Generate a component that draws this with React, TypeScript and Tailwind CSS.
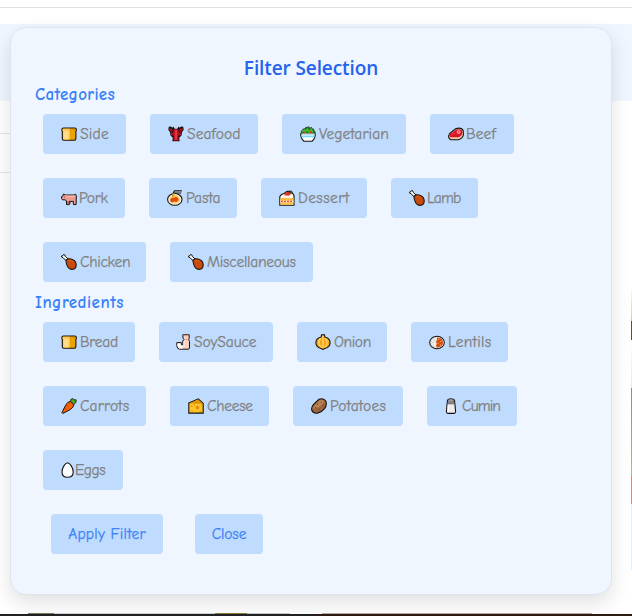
import type { ReactNode } from "react";

type IconName =
  | "bread" | "lobster" | "salad" | "steak" | "pig" | "pasta" | "cake" | "drumstick"
  | "bottle" | "onion" | "curry" | "carrot" | "cheese" | "potato" | "salt" | "egg";

const ink = "#17120f";

const drawings: Record<IconName, ReactNode> = {
  bread: (
    <>
      <path d="M2.500 2h11.200q1.700 0 1.700 1.700 0 1-.5 1.500v7.300q0 1.700-1.400 1.700H2.700q-1.400 0-1.400-1.700V5.200Q.8 4.700.8 3.700.8 2 2.500 2Z" fill="#eba300" stroke={ink} strokeWidth="1.100" />
      <path d="M2.600 2.800h6.200v10.700H2.900q-.9 0-.9-.9V5Q1.500 4.500 1.500 3.800q0-1 1.100-1Z" fill="#ffc95a" />
      <path d="M2.400 5h5v8.200H3q-.6 0-.6-.6Z" fill="#ffdc8c" />
      <path d="M9 3.200h4.800" stroke="#c9830a" strokeWidth=".8" />
    </>
  ),
  lobster: (
    <>
      <path d="M.8.8 3 .5l1.200 1.200L5.600.5l1 2.300h2.800l1-2.300 1.400 1.200L13 .5l2.200.3.500 3-1.700 2.400-.500 3.300-2.300 2.200.500 3.500H4.300l.500-3.500-2.300-2.200L2 6.200.3 3.800Z" fill={ink} />
      <path d="M1.500 1.700 3 3.200l.8-1 .8 2.200L4 5.700 1.300 3.800ZM14.500 1.700 13 3.200l-.8-1-.8 2.200.6 1.300 2.700-1.900ZM6 3.500h4l1.200 3.200-1.100 4.300.6 3.200H5.300l.6-3.200-1.100-4.300Z" fill="#c50f1f" />
      <path d="M7.300 3.500h1.500v9.600H7.300Z" fill="#ef3d50" />
      <path d="M2.800 6.400 5 7.600M2.900 8.500 5.200 9.200M13.200 6.400l-2.200 1.200m2.100.9-2.300.7M6 13.900h4" stroke="#d91c30" strokeWidth="1" fill="none" />
    </>
  ),
  salad: (
    <>
      <path d="m1 8 .3-3 1.300-.2.500-2 1.700.1L5.800 1l1.500 1 1-1.600L9.600 2l1.600-.8.700 1.700 1.900.1.100 1.900 1.200.5L15 8Z" fill="#16871c" stroke={ink} strokeWidth=".9" strokeDasharray="1.500 1" />
      <path d="m2.500 6 1.700-2 1.500 2 1.600-3 1.800 3 2-2.500L13 6" stroke="#55c938" strokeWidth="1.100" fill="none" />
      <path d="M4 7.200h2M9.800 6h1.800" stroke="#f03a17" strokeWidth="1.800" />
      <path d="M.7 8h14.600q0 4.800-3.400 7.300H4.100Q.7 12.800.7 8Z" fill="#fff" stroke={ink} strokeWidth="1.100" />
      <path d="M1.300 9.500h13.400l-.5 1.800H1.800ZM1.300 8h13.400v.8H1.300Z" fill="#73dcf6" />
      <path d="M1.500 8h13" stroke="#fff" strokeWidth="1" />
    </>
  ),
  steak: (
    <>
      <path d="M4.200 5.500 8 2.600q5.500-1.500 7.200 2.100l.2 4.200q-.8 3.500-4.800 4.800H3.200Q.4 13 .6 9.800.8 7.500 4.200 5.500Z" fill="#f1cba6" stroke={ink} strokeWidth="1.100" />
      <path d="M4.800 6.200 8.400 3.500q5-1.200 6 1.900.3 4-3.800 5.900H2.200Q1 9.500 1.800 8Z" fill="#d91427" />
      <circle cx="10.600" cy="6" r="1.500" fill="#e94955" stroke="#ffc7c5" strokeWidth=".8" />
      <path d="m3.500 8.500 3.200-1.400" stroke="#f04a55" strokeWidth=".8" />
    </>
  ),
  pig: (
    <>
      <path d="M.6 6.500 2 5.900l.4-1.900 2 1H13l1.600-.8.700 1.400-.2 9H12.400v-3.200H8.300v3.200H5.500v-3.700L3.900 9.800H1.500L.6 8.600Z" fill="#ed9a91" stroke={ink} strokeWidth="1" />
      <path d="M3 5.400h9.700q1.500.3 1.500 1.700H6.500Z" fill="#ffb9ae" />
      <path d="M3 7h1M9.500 11.700v2M6.800 11.200v2.700" stroke="#8f403d" strokeWidth=".8" />
    </>
  ),
  pasta: (
    <>
      <ellipse cx="7.800" cy="9.400" rx="7.200" ry="5.900" fill="#fff" stroke={ink} strokeWidth="1.100" />
      <ellipse cx="7.800" cy="9.400" rx="5.700" ry="4.500" fill="#ffd66b" />
      <path d="m3.200 9.200 2.200-1.800 1.700.6 1.700-1.600 2.100 1.500 1 2-2.500 2.200-2.200-.5-2 .9-1.800-1Z" fill="#df4c11" />
      <path d="M6.200 6.500V3.200L7.500.9h7.300M6.500 3h7.700" stroke={ink} strokeWidth="1.200" fill="none" />
      <path d="M7.500 1.900h6" stroke="#9b9b93" strokeWidth=".8" />
      <path d="M6.500 3.200v4.500" stroke="#eaa51f" strokeWidth="1.900" />
    </>
  ),
  cake: (
    <>
      <path d="M.8 6.500Q2 4 5.100 3.500L8 1.300l4.500.5 2.500 3.700v9.800H.8Z" fill="#fff5e8" stroke={ink} strokeWidth="1.100" />
      <path d="M1.400 8h13v6.600h-13Z" fill="#ffbd43" />
      <path d="M1.400 10.700h13v1.500h-13Z" fill="#fff" />
      <path d="M2 11.400h12" stroke="#e34b31" strokeWidth="1.300" strokeDasharray="2 1" />
      <path d="M5.200 5.200Q6 2 9.500 1.600l2.800 2.200-2.600 1.900Z" fill="#e2341f" />
      <path d="m10 .7 3 .7-.5 2.200-2-.9Z" fill="#198330" stroke={ink} strokeWidth=".5" />
    </>
  ),
  drumstick: (
    <>
      <path d="m4.800 6.500-2.700-2.800-1.500-.6.1-1.200L2 1.600 2.500.5l1.300.3.500 1.700 3 2.600Z" fill="#fff" stroke={ink} strokeWidth="1" />
      <path d="M4.900 6.300 7.200 4.800q5-.3 7.400 3.300 1.700 4.700-1.200 6.600-3.200 1.700-5.900-.9Q5.500 11.700 4.900 6.300Z" fill="#c84b0b" stroke={ink} strokeWidth="1.050" />
      <path d="M7 6.600q3-1.200 5.400 1.500" stroke="#e06418" strokeWidth=".8" fill="none" />
    </>
  ),
  bottle: (
    <>
      <path d="M6.800.8h6.400v3.500l-.6 1 .9 2.200v6.700q-.4 1-1.500 1H3.500Q1 14.900.8 11.500V8.600h4.500v2.200h1.500V7l1.200-1.700-.9-1Z" fill="#fbd4c3" stroke={ink} strokeWidth="1" />
      <path d="M1.500 9.500h3v2.100h2.200v2.800H3.800q-2-.3-2.300-2.800Z" fill="#fff" />
      <path d="M7.500 1.600h4.900M8.500 5.500h3.800" stroke="#d59c87" strokeWidth=".9" />
      <path d="M8 7.500v5" stroke="#ffeadf" strokeWidth="1.300" />
    </>
  ),
  onion: (
    <>
      <path d="m6.100 3 .5-2.300h2.800L9.900 3q5.300 1.300 5.200 5.900-.1 3.700-4.600 5.400L8 15.400l-2.500-1.100Q1 12.500.9 8.900.8 4.300 6.100 3Z" fill="#f3a81c" stroke={ink} strokeWidth="1.100" />
      <path d="M5.900 4.200Q3.500 6 3.900 9q.2 3.100 2.700 4.500M8 2v12M10.200 4.200q2.300 2 1.900 5.300-.2 2.300-2.500 4" stroke="#ffda78" strokeWidth="1.200" fill="none" />
    </>
  ),
  curry: (
    <>
      <ellipse cx="8" cy="8.500" rx="7.300" ry="6.300" fill="#fff" stroke={ink} strokeWidth="1.100" />
      <ellipse cx="8" cy="8.500" rx="6" ry="5" fill="#f1eee6" stroke="#a7aba8" strokeWidth=".4" />
      <path d="M8 3.500q5.700.2 6 5-.3 4.700-6 5l-1.100-1.700.9-1.800-.8-2 .9-1.900Z" fill="#d84c12" />
      <path d="M9 5.300h1.200M11 7.500h1.400M8.500 9.300h1.300M10.900 11H12" stroke="#ffb154" strokeWidth="1.100" />
      <path d="M3.500 8.500h1M5.200 6.500h.8" stroke="#75afa4" strokeWidth=".8" />
    </>
  ),
  carrot: (
    <>
      <path d="M9.500 3.200 13 6.500q-.6 3.200-3.700 5l-7.500 4-.9-.9 3.700-7.300q1.900-3.500 4.900-4.100Z" fill="#f4630c" stroke={ink} strokeWidth="1" />
      <path d="m9.700 3.700.2-2.400 2-.8 1 1.300h2.200v2.500l-2.400 2.200Z" fill="#55a51c" stroke={ink} strokeWidth=".8" />
      <path d="m5.300 6.800 2 1.900M8 4.500l1.500 1.600M4.200 10.300l1.500 1.300" stroke="#a93306" strokeWidth=".8" />
    </>
  ),
  cheese: (
    <>
      <path d="M.8 5 10.300.8l4.900 4.600v9.700H.8Z" fill="#ffc32b" stroke={ink} strokeWidth="1.100" />
      <path d="m1.500 5.500 8.700-3.900 4.300 4.100Z" fill="#e09208" />
      <circle cx="9.500" cy="9.600" r="1.800" fill="#dd8d08" />
      <path d="M3 8.300h1.500M3.500 12.900h1.400M13 7.900h1.300M11.600 13.300h1.600M6 7h1" stroke="#e7990b" strokeWidth="1.400" />
    </>
  ),
  potato: (
    <>
      <path d="M8 1.300q4.800-1.600 6.900 1.900 1.300 4.100-1.500 7.600-3 3.500-7 4.300-4 .6-5.600-2.800Q0 8.800 3 5.800Z" fill="#9c663c" stroke={ink} strokeWidth="1.100" />
      <path d="M8.300 2.300q3.900-1.300 5.400 1.600l-5.200 5L2 11q-.2-2.100 2-4Z" fill="#b98253" />
      <path d="M6 6.200h1M9.700 4.300h1M11.500 7.200h1M4 9.700h1M7.500 11h1" stroke="#65391e" strokeWidth=".9" />
    </>
  ),
  salt: (
    <>
      <path d="M4.600 2Q5.300.7 8 .7T11.400 2l.5 3.800.7 8q-.2 1.600-1.500 1.600H4.900q-1.300 0-1.500-1.600l.7-8Z" fill="#ececec" stroke={ink} strokeWidth="1.100" />
      <path d="M5.100 2.200Q5.800 1.300 8 1.300t2.900.9l.5 4.100H4.600Z" fill="#727272" />
      <path d="M5.500 2.500h4.900M5.200 4.200h5.200" stroke="#aaa" strokeWidth=".8" />
      <path d="M5.200 7.500v6.700" stroke="#fff" strokeWidth="1.200" />
    </>
  ),
  egg: (
    <>
      <path d="M6.600.7q1.800.1 3.700 3.200 1.900 3 1.900 6.100 0 5.300-5.600 5.300T1 10q0-3.100 1.900-6.100Q4.800.8 6.600.7Z" fill="#fff" stroke={ink} strokeWidth="1.100" />
      <path d="M2.800 10.300q1.500 3.400 4.600 3.700" stroke="#e4e4e7" strokeWidth=".7" fill="none" />
    </>
  ),
};

type Option = { label: string; icon: IconName; box: string; tracking: string; offset?: string };

const categories: Option[][] = [
  [
    { label: "Side", icon: "bread", box: "w-[83px]", tracking: "tracking-[0.2px]" },
    { label: "Seafood", icon: "lobster", box: "w-[108px]", tracking: "tracking-[0.1px]" },
    { label: "Vegetarian", icon: "salad", box: "w-[124px]", tracking: "tracking-[0.05px]" },
    { label: "Beef", icon: "steak", box: "w-[84px]", tracking: "tracking-[0.1px]", offset: "-mr-px" },
  ],
  [
    { label: "Pork", icon: "pig", box: "w-[82px]", tracking: "tracking-[-0.3px]", offset: "-mr-px" },
    { label: "Pasta", icon: "pasta", box: "w-[88px]", tracking: "tracking-[0px]" },
    { label: "Dessert", icon: "cake", box: "w-[106px]", tracking: "tracking-[0.4px]" },
    { label: "Lamb", icon: "drumstick", box: "w-[87px]", tracking: "tracking-[-0.75px]", offset: "-mr-px" },
  ],
  [
    { label: "Chicken", icon: "drumstick", box: "w-[103px]", tracking: "tracking-[-0.3px]" },
    { label: "Miscellaneous", icon: "drumstick", box: "w-[143px]", tracking: "tracking-[-0.25px]" },
  ],
];

const ingredients: Option[][] = [
  [
    { label: "Bread", icon: "bread", box: "w-[92px]", tracking: "tracking-[-0.3px]" },
    { label: "SoySauce", icon: "bottle", box: "w-[114px]", tracking: "tracking-[-0.1px]", offset: "-ml-px -mr-px" },
    { label: "Onion", icon: "onion", box: "w-[90px]", tracking: "tracking-[-0.4px]" },
    { label: "Lentils", icon: "curry", box: "w-[97px]", tracking: "tracking-[0.25px]" },
  ],
  [
    { label: "Carrots", icon: "carrot", box: "w-[103px]", tracking: "tracking-[0.1px]" },
    { label: "Cheese", icon: "cheese", box: "w-[99px]", tracking: "tracking-[-0.3px]" },
    { label: "Potatoes", icon: "potato", box: "w-[110px]", tracking: "tracking-[0.2px]" },
    { label: "Cumin", icon: "salt", box: "w-[90px]", tracking: "tracking-[-0.85px]", offset: "-ml-0.5" },
  ],
  [{ label: "Eggs", icon: "egg", box: "w-[80px]", tracking: "tracking-[-0.5px]", offset: "-mr-[5px]" }],
];

function FilterButton({ option }: { option: Option }) {
  return (
    <button className={`flex h-10 shrink-0 items-center rounded bg-[#bfdbfe] pl-[18px] text-[#808080] ${option.box}`}>
      <svg viewBox="0 0 16 16" className={`size-4 shrink-0 ${option.offset ?? ""}`}>{drawings[option.icon]}</svg>
      <span className={`ml-[3px] whitespace-nowrap ${option.tracking}`}>{option.label}</span>
    </button>
  );
}

function OptionRows({ rows }: { rows: Option[][] }) {
  return (
    <div className="flex flex-col gap-6 pl-2">
      {rows.map((row, i) => (
        <div key={i} className="flex gap-6">
          {row.map((option) => <FilterButton key={option.label} option={option} />)}
        </div>
      ))}
    </div>
  );
}

export default function App() {
  return (
    <div className="relative h-[616px] w-[632px] overflow-hidden bg-white">
      <div className="flex h-full flex-col">
        <div className="h-2 shrink-0 border-b border-[#dfe1e4]" />
        <div className="h-4 shrink-0" />
        <div className="h-[77px] shrink-0 bg-[#eff6ff]" />
        <div className="flex grow justify-between">
          <div className="h-[72px] w-5 border-b border-[#e5e5e5] pt-8">
            <div className="border-t border-[#e5e5e5]" />
          </div>
          <div className="flex w-px flex-col pt-[188px]">
            <div className="h-8 bg-gradient-to-b from-[#fafaf5] to-[#cecbb8]" />
            <div className="h-[19px] bg-[#5a513b]" />
            <div className="h-12 bg-gradient-to-b from-white to-[#e5e5e5]" />
            <div className="h-[88px] bg-gradient-to-b from-[#8c8c88] to-[#b4b4aa]" />
            <div className="h-7 bg-[#cf8b80]" />
            <div className="h-[66px] bg-[#e5edf5]" />
          </div>
        </div>
        <div className="flex h-px shrink-0 pl-7">
          <div className="w-[26px] bg-[#75795c]" />
          <div className="w-[161px] bg-[#cbd3d9]" />
          <div className="w-8 bg-[#85773b]" />
          <div className="w-[43px] bg-[#c5cacc]" />
          <div className="ml-[32px] w-[270px] bg-[#b8aa9f]" />
        </div>
        <div className="flex h-0.5 shrink-0">
          <div className="w-1/2 bg-[#222222]" />
          <div className="w-1/2 bg-[#2d1b14]" />
        </div>
      </div>

      <section className="absolute left-[10px] top-[27px] h-[568px] w-[602px] rounded-2xl border border-[#dfe4ec] bg-[#eff6ff] px-6 pt-[26px] font-['Comic_Neue','Comic_Sans_MS','Lato',sans-serif] text-[15.5px] leading-6 shadow-[0_8px_20px_rgba(0,0,0,0.12)] [-webkit-text-stroke:0.25px]">
        <h2 className="text-center font-['Open_Sans',sans-serif] text-[19px] font-semibold leading-7 tracking-[-0.1px] text-[#2563eb] [-webkit-text-stroke:0px]">Filter Selection</h2>
        <h3 className="mb-[7px] mt-px text-[17px] font-bold leading-6 tracking-[0.3px] text-[#3b82f6] [-webkit-text-stroke:0px]">Categories</h3>
        <OptionRows rows={categories} />
        <h3 className="mb-[7px] mt-[9px] text-[17px] font-bold leading-6 tracking-[0.5px] text-[#3b82f6] [-webkit-text-stroke:0px]">Ingredients</h3>
        <OptionRows rows={ingredients} />
        <div className="mt-6 flex gap-8 pl-4 text-[#3b82f6]">
          <button className="h-10 w-28 rounded bg-[#bfdbfe] tracking-[0.25px]">Apply Filter</button>
          <button className="h-10 w-[68px] rounded bg-[#bfdbfe] tracking-[-0.1px]">Close</button>
        </div>
      </section>
    </div>
  );
}
